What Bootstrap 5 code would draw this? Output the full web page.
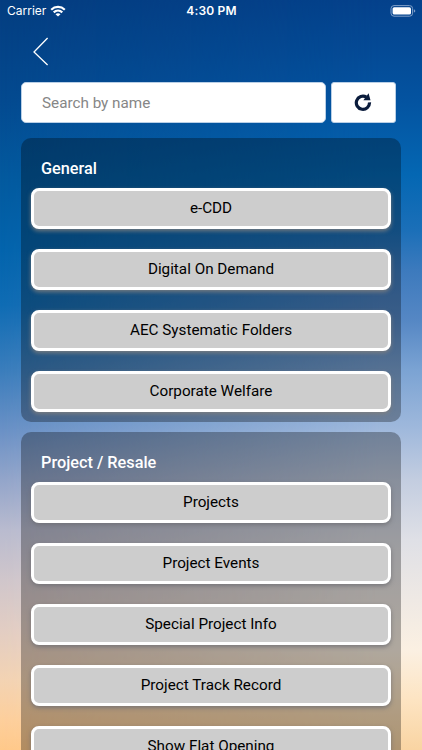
<!DOCTYPE html>
<html lang="en">
<head>
<meta charset="utf-8">
<meta name="viewport" content="width=device-width, initial-scale=1">
<title>Search by name</title>
<link href="https://cdn.jsdelivr.net/npm/bootstrap@5.3.0/dist/css/bootstrap.min.css" rel="stylesheet">
<style>
html,body{height:100%}
body{font-family:Roboto,"Liberation Sans",sans-serif;font-size:15.2px;background:#04408a}
.app-screen{height:750px;isolation:isolate;
 background:linear-gradient(180deg,#043d80 0,#044a90 100px,#035a9f 180px,#0364ad 250px,#0f6cb4 305px,#3a7dbc 370px,#6a91c6 430px,#93a5ca 480px,#b9bbcf 530px,#d0c6cb 580px,#e2cdc3 630px,#f3d3b3 680px,#fdcf9c 720px,#ffc98a 750px)}
/* the brighter right side of the sky */
.app-screen::before{content:"";position:absolute;inset:0;z-index:-1;
 background:linear-gradient(180deg,#04418b 0,#0453a0 100px,#0467b3 175px,#1b6fb8 230px,#3c7abd 270px,#5587c4 320px,#7ba3d3 370px,#a0b9dc 430px,#c3cde0 480px,#dfe0e6 540px,#efe9e4 600px,#fbf0e2 650px,#fde4c2 700px,#f9d4a2 750px);
 -webkit-mask-image:linear-gradient(90deg,transparent,#000 90%);mask-image:linear-gradient(90deg,transparent,#000 90%)}
.status-bar{height:22px;font-family:Inter,sans-serif;font-size:12px;padding:0 6px 0 7px}
.status-bar>*{flex:1 1 0}
.status-time{font-weight:600;font-size:12px;letter-spacing:.2px}
.back-row{height:60px;padding:15px 0 0 32px}
.search-row{gap:5px;padding:0 26px 0 21px;height:40.5px}
.search-box{width:305px;border:1px solid #b9cfe6;border-radius:5px;padding:2px 20px 0 20px;font-size:15.25px;color:#333}
.search-box::placeholder{color:#868686;opacity:1}
.refresh-btn{width:65px;border:1px solid #b9cfe6;border-radius:3px}
.groups{padding:15.5px 21px 0;gap:10.5px}
.group-panel{background:rgba(0,0,0,.3);border-radius:10px;padding:20px 10px 10px}
.group-title{font-size:16.3px;font-weight:500;line-height:20px;padding:1px 0 0 10px;margin:0 0 9px}
.group-items{gap:20.5px}
.menu-btn{height:40.5px;background:#cdcdcd;border:3px solid #fff;border-radius:8px;box-shadow:0 2px 4px rgba(128,128,128,.9);font-size:15.25px;color:#000;padding:0;line-height:34.5px}
.group-panel+.group-panel .menu-btn{box-shadow:0 2px 4px rgba(110,110,115,.8)}
</style>
<script src="https://cdn.jsdelivr.net/npm/bootstrap@5.3.0/dist/js/bootstrap.bundle.min.js"></script>
</head>
<body class="overflow-hidden m-0">
<main class="app-screen position-relative overflow-hidden d-flex flex-column">
 <header class="status-bar d-flex align-items-center text-white flex-shrink-0">
  <div class="d-flex align-items-center gap-1"><span>Carrier</span>
   <svg width="16" height="12" viewBox="0 0 16 12" fill="none" stroke="#fff" stroke-width="2.2"><path d="M1.2 4.7C5 1 11 1 14.8 4.7M3.7 7.4c2.5-2.3 6.1-2.3 8.6 0"/><path d="M8 11.6 5.5 9.2c1.4-1.3 3.6-1.3 5 0z" fill="#fff" stroke="none"/></svg>
  </div>
  <div class="status-time text-center">4:30 PM</div>
  <div class="d-flex justify-content-end">
   <svg width="26" height="12" viewBox="0 0 26 12"><rect x="1" y=".6" width="21.6" height="10.6" rx="3" fill="none" stroke="#7f9fc9"/><rect x="2.6" y="2.2" width="18.4" height="7.4" rx="1.6" fill="#fff"/><path d="M23.9 4.2q1.4.5 1.4 1.7t-1.4 1.7z" fill="#7f9fc9"/></svg>
  </div>
 </header>
 <nav class="back-row flex-shrink-0">
  <a href="#" class="d-block lh-1" aria-label="Back"><svg class="d-block" width="18" height="30" viewBox="0 0 18 30" fill="none" stroke="#fff" stroke-width="1.3"><path d="M15.6 1 2 15l13.6 13"/></svg></a>
 </nav>
 <form class="search-row d-flex flex-shrink-0">
  <input class="search-box bg-white" type="text" placeholder="Search by name" aria-label="Search by name">
  <button type="button" class="refresh-btn btn bg-white p-0 d-flex align-items-center justify-content-center" aria-label="Refresh">
   <svg width="19" height="18" viewBox="0 0 19 18"><path d="M12.4 4.1A6.6 6.6 0 1 0 15.5 9.3" fill="none" stroke="#0b1c3c" stroke-width="3.2"/><path d="M14.6 .3 16.5 7.3 9.4 7.3z" fill="#0b1c3c"/></svg>
  </button>
 </form>
 <div class="groups d-flex flex-column flex-shrink-0">
  <section class="group-panel">
   <h2 class="group-title text-white">General</h2>
   <div class="group-items d-grid">
    <button class="btn menu-btn">e-CDD</button>
    <button class="btn menu-btn">Digital On Demand</button>
    <button class="btn menu-btn">AEC Systematic Folders</button>
    <button class="btn menu-btn">Corporate Welfare</button>
   </div>
  </section>
  <section class="group-panel">
   <h2 class="group-title text-white">Project / Resale</h2>
   <div class="group-items d-grid">
    <button class="btn menu-btn">Projects</button>
    <button class="btn menu-btn">Project Events</button>
    <button class="btn menu-btn">Special Project Info</button>
    <button class="btn menu-btn">Project Track Record</button>
    <button class="btn menu-btn">Show Flat Opening</button>
   </div>
  </section>
 </div>
</main>
</body>
</html>
